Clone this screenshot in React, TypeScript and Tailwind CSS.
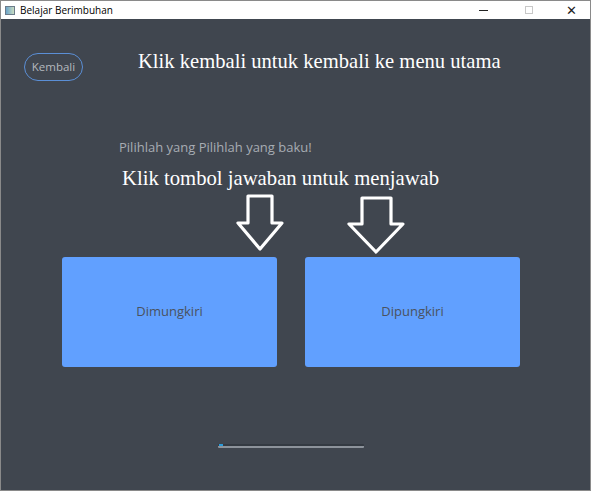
import React from 'react';

const sans = { fontFamily: '"Open Sans", "Noto Sans", sans-serif' };
const serif = { fontFamily: '"Liberation Serif", serif' };

function DownArrow({ w, h, points }: { w: number; h: number; points: string }) {
  return (
    <svg width={w} height={h} viewBox={`0 0 ${w} ${h}`} className="block">
      <polygon points={points} fill="none" stroke="#ffffff" strokeWidth="3.2" strokeLinejoin="round" />
    </svg>
  );
}

export default function App() {
  return (
    <div className="w-[591px] h-[491px] bg-[#40464f] border border-[#8a8a8a] flex flex-col overflow-hidden">
      {/* title bar */}
      <div className="h-[18px] bg-white flex items-center shrink-0" style={sans}>
        <div className="ml-[4px] w-[10px] h-[9px] border border-[#6b7b8a] bg-gradient-to-r from-[#6aa3c8] to-[#c9dcc0]" />
        <span className="ml-[5px] text-[10px] text-black leading-none">Belajar Berimbuhan</span>
        <div className="ml-auto flex items-center">
          <div className="w-[46px] flex justify-center"><div className="w-[9px] h-px bg-[#222]" /></div>
          <div className="w-[46px] flex justify-center"><div className="w-[8px] h-[8px] border border-[#c8c8c8]" /></div>
          <div className="w-[38px] flex justify-center text-[13px] leading-none text-[#222]">✕</div>
        </div>
      </div>

      {/* header row */}
      <div className="flex items-start mt-[34px]">
        <button
          className="ml-[23px] w-[59px] h-[28px] rounded-full border border-[#5b8fd6] text-[11.5px] text-[#b4b8be] leading-none"
          style={sans}
        >
          Kembali
        </button>
        <div className="ml-[55px] -mt-[2px] text-[20.6px] text-white leading-[21px]" style={serif}>
          Klik kembali untuk kembali ke menu utama
        </div>
      </div>

      <div className="ml-[118px] mt-[57px] text-[13px] text-[#a7acb3] leading-[18px]" style={sans}>
        Pilihlah yang Pilihlah yang baku!
      </div>
      <div className="ml-[121px] mt-[10px] text-[20.7px] text-white leading-[24px]" style={serif}>
        Klik tombol jawaban untuk menjawab
      </div>

      {/* arrows */}
      <div className="flex items-start mt-[4px] h-[63px]">
        <div className="ml-[235px]">
          <DownArrow w={48} h={57} points="12,2 36,2 36,29 46,29 24,55 2,29 12,29" />
        </div>
        <div className="ml-[63px] mt-[2px]">
          <DownArrow w={58} h={58} points="15,2 44,2 44,28 56,28 29,56 2,28 15,28" />
        </div>
      </div>

      {/* answer buttons */}
      <div className="flex ml-[61px] gap-[28px]">
        {['Dimungkiri', 'Dipungkiri'].map((t) => (
          <button
            key={t}
            className="w-[215px] h-[110px] rounded-[3px] bg-[#61a0ff] text-[13px] text-[#4a5260] flex items-center justify-center"
            style={sans}
          >
            {t}
          </button>
        ))}
      </div>

      {/* progress */}
      <div className="ml-[217px] mt-[77px] w-[146px] h-[4px] bg-[#343a42] border-b-2 border-[#8d939b] rounded-[1px] relative">
        <div className="absolute left-[1px] top-[0px] w-[4px] h-[2px] bg-[#2a9ad8]" />
      </div>
    </div>
  );
}
